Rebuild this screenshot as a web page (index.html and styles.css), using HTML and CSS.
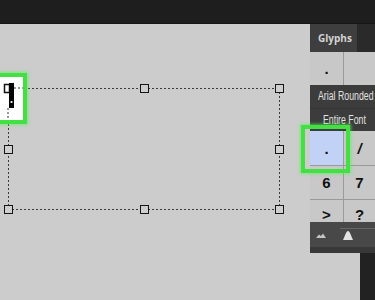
FILE: index.html
```html
<!DOCTYPE html>
<html lang="en">
<head>
  <meta charset="UTF-8">
  <meta name="viewport" content="width=device-width, initial-scale=1.0">
  <title>Glyphs panel</title>
  <link rel="stylesheet" href="styles.css">
</head>
<body>
  <div class="topbar"></div>

  <div class="workspace">
    <div class="canvas">
      <div class="selection">
        <span class="handle tl"></span>
        <span class="handle tm"></span>
        <span class="handle tr"></span>
        <span class="handle ml"></span>
        <span class="handle mr"></span>
        <span class="handle bl"></span>
        <span class="handle bm"></span>
        <span class="handle br"></span>
      </div>

      <div class="callout callout-cursor">
        <svg width="25" height="43" viewBox="0 0 25 43">
          <line x1="16" y1="11" x2="25" y2="11" stroke="#333" stroke-width="1" stroke-dasharray="2 2"/>
          <line x1="10" y1="31" x2="10" y2="43" stroke="#333" stroke-width="1" stroke-dasharray="2 2"/>
          <rect x="6.5" y="7.5" width="5" height="8" fill="#fff" stroke="#111" stroke-width="1.5"/>
          <rect x="11" y="6" width="5" height="25" fill="#000"/>
          <circle cx="13.5" cy="25" r="1.1" fill="#fff"/>
        </svg>
      </div>
    </div>

    <aside class="side">
      <div class="panel">
        <div class="tabs">
          <span class="tab">Glyphs</span>
        </div>
        <div class="recent">
          <div class="cell">.</div>
          <div class="cell"></div>
        </div>
        <div class="field"><span>Arial Rounded</span></div>
        <div class="field field-sub"><span>Entire Font</span></div>
        <div class="glyphs">
          <div class="cell selected">.</div>
          <div class="cell slash">/</div>
          <div class="cell">6</div>
          <div class="cell">7</div>
          <div class="cell low">&gt;</div>
          <div class="cell low">?</div>
        </div>
        <div class="panel-foot">
          <svg width="65" height="25" viewBox="0 0 65 25">
            <line x1="30" y1="6.5" x2="65" y2="6.5" stroke="#666" stroke-width="1"/>
            <path d="M6 16 L9 12.5 L11 14 L13 11.5 L16 16 Z" fill="#c4c4c4"/>
            <path d="M33 18 L36 11 Q38 7 40 11 L43 18 Z" fill="#e2e2e2"/>
          </svg>
        </div>
        <div class="panel-edge"></div>
      </div>
      <div class="side-below">
        <div class="side-gap"></div>
        <div class="side-dark"></div>
      </div>

      <div class="callout callout-cell"></div>
    </aside>
  </div>
</body>
</html>
```

FILE: styles.css
```css
body {
  margin: 0;
  height: 300px;
  overflow: hidden;
  background: #1e1e1e;
  font-family: "Liberation Sans", Arial, sans-serif;
}
.topbar {
  height: 23px;
  background: #1e1e1e;
  border-bottom: 1px solid #151515;
}
.workspace {
  display: flex;
  height: 276px;
}
.canvas {
  flex: 1;
  position: relative;
  background: #cdcccd;
  padding: 64px 0 0 8px;
}
.selection {
  position: relative;
  width: 272px;
  height: 122px;
  background:
    linear-gradient(90deg, #3a3a3a 50%, transparent 50%) top left / 4px 1px repeat-x,
    linear-gradient(90deg, #3a3a3a 50%, transparent 50%) bottom left / 4px 1px repeat-x,
    linear-gradient(180deg, #3a3a3a 50%, transparent 50%) top left / 1px 4px repeat-y,
    linear-gradient(180deg, #3a3a3a 50%, transparent 50%) top right / 1px 4px repeat-y;
}
.handle {
  position: absolute;
  width: 9px;
  height: 9px;
  box-sizing: border-box;
  border: 1.5px solid #151515;
  background: #cfcfcf;
}
.tl, .tm, .tr { top: -4px; }
.ml, .mr { top: calc(50% - 4.5px); }
.bl, .bm, .br { bottom: -4px; }
.tl, .ml, .bl { left: -4px; }
.tm, .bm { left: calc(50% - 4.5px); }
.tr, .mr, .br { right: -4px; }

.callout {
  position: absolute;
  border: 4px solid #42e042;
  box-shadow: 0 0 3px 1px rgba(90, 240, 90, 0.7);
}
.callout-cursor {
  top: 49px;
  left: -6px;
  width: 25px;
  height: 43px;
  background: #fff;
}
.callout-cursor svg {
  display: block;
}
.callout-cell {
  top: 101px;
  left: -9px;
  width: 41px;
  height: 40px;
}

.side {
  width: 65px;
  position: relative;
  display: flex;
  flex-direction: column;
}
.panel {
  height: 229px;
  display: flex;
  flex-direction: column;
  background: #3c3c3c;
  overflow: hidden;
}
.tabs {
  height: 28px;
  display: flex;
  background: #2a2a2a;
}
.tab {
  width: 39px;
  padding-left: 8px;
  background: #3e3e3e;
  color: #d4d4d4;
  font-family: "Open Sans", sans-serif;
  font-weight: bold;
  font-size: 10px;
  line-height: 28px;
}
.recent, .glyphs {
  display: grid;
  grid-template-columns: 33px 31px;
  gap: 1px;
  background: #9a9a9a;
}
.recent {
  height: 33px;
  grid-template-rows: 33px;
}
.cell {
  background: #c8c8c8;
  color: #111;
  font-weight: bold;
  font-size: 15px;
  display: flex;
  align-items: center;
  justify-content: center;
}
.field {
  height: 23px;
  padding-left: 8px;
  color: #e2e2e2;
  font-size: 12px;
  line-height: 23px;
  white-space: nowrap;
  border-bottom: 1px solid #333;
}
.field span {
  display: inline-block;
  transform: scaleX(0.73);
  transform-origin: left center;
}
.field-sub {
  height: 22px;
  padding-left: 13px;
  border-bottom: none;
}
.glyphs {
  height: 91px;
  grid-template-rows: 34px 33px 34px;
  overflow: hidden;
}
.selected {
  background: #c2d2f6;
}
.slash {
  font-style: italic;
}
.low {
  align-items: flex-start;
  padding-top: 6px;
}
.panel-foot {
  height: 25px;
  background: #484848;
}
.panel-foot svg {
  display: block;
}
.panel-edge {
  height: 6px;
  background: #383838;
}
.side-below {
  flex: 1;
  display: flex;
}
.side-gap {
  width: 50px;
  background: #cdcccd;
}
.side-dark {
  flex: 1;
  background: #222;
}
```
